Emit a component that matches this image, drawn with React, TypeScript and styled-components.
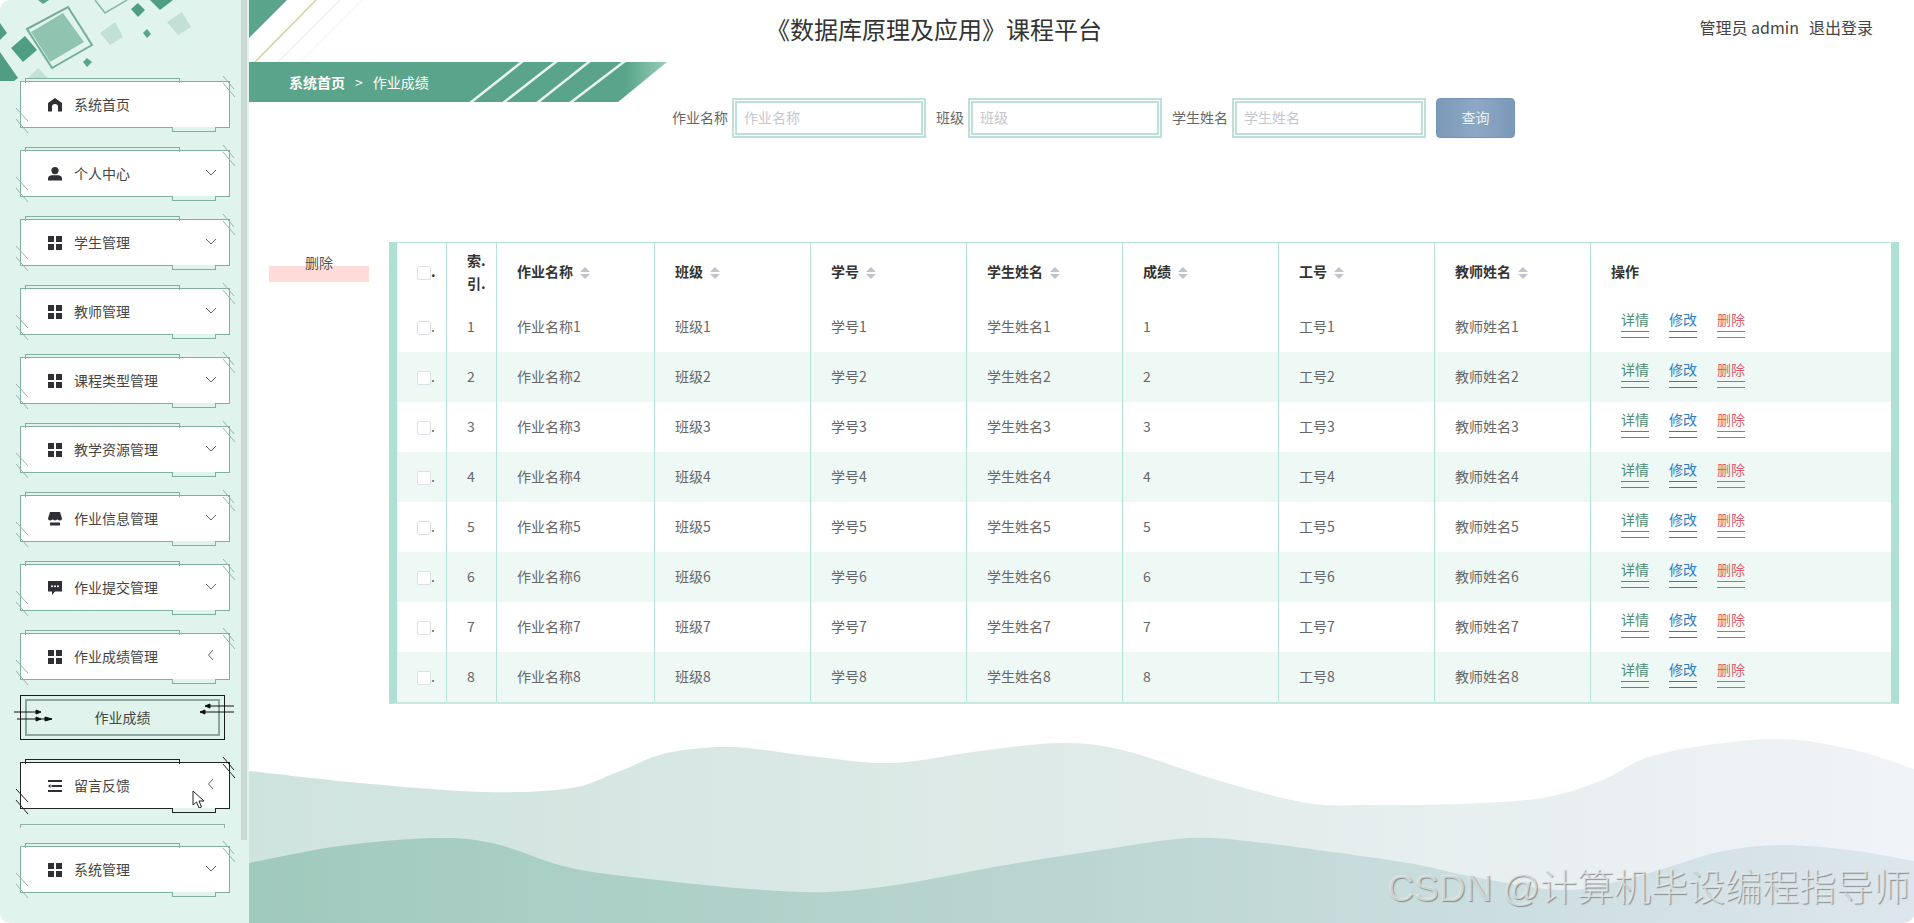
import React from 'react';
import styled, {createGlobalStyle} from 'styled-components';

const GlobalStyle = createGlobalStyle`
  html, body {
    margin: 0;
    padding: 0;
    background: #fff;
    overflow: hidden;
  }
  * {
    box-sizing: border-box;
  }
  body, input, button {
    font-family: "Noto Sans CJK SC", "Noto Sans", sans-serif;
  }
`

const Page = styled.div`
  display: flex;
  width: 1914px;
  height: 923px;
  overflow: hidden;
`

const Sidebar = styled.aside`
  position: relative;
  flex: 0 0 249px;
  height: 923px;
  overflow: hidden;
  background: #e0f4ed;
  border-radius: 10px 0 0 10px;

  &::after {
    content: '';
    position: absolute;
    top: 0;
    left: 241px;
    width: 6px;
    height: 840px;
    background: #cad9d4;
  }
`

const SideDecor = styled.svg`
  display: block;
  width: 241px;
  height: 81px;
`

const Item = styled.div<{ $hover?: boolean; $first?: boolean }>`
  position: relative;
  display: flex;
  align-items: center;
  width: 210px;
  height: 47px;
  margin: ${p => (p.$first ? '0' : '22px')} 0 0 20px;
  padding-left: 27px;
  background: #fff;
  border: 1px solid ${p => (p.$hover ? '#222' : '#7fb0a0')};
  color: ${p => (p.$hover ? '#222' : '#8fb8ab')};

  &::before {
    content: '';
    position: absolute;
    top: -4px;
    left: 4px;
    width: 153px;
    height: 4px;
    border: 1px solid ${p => (p.$hover ? '#222' : '#7fb0a0')};
    border-bottom: 0;
  }

  &::after {
    content: '';
    position: absolute;
    bottom: -5px;
    left: 151px;
    width: 42px;
    height: 4px;
    border: 1px solid ${p => (p.$hover ? '#222' : '#7fb0a0')};
    border-top: 0;
    background: #e0f4ed;
  }
`

const ItemLabel = styled.span`
  margin-left: 12px;
  padding-bottom: 1px;
  font-size: 14px;
  line-height: 20px;
  color: #454545;
`

const ItemIcon = styled.svg`
  width: 14px;
  height: 14px;
  flex: none;
`

const Arrow = styled.svg<{ $left?: boolean }>`
  position: absolute;
  top: ${p => (p.$left ? '16px' : '17px')};
  right: 12px;
  width: 12px;
  height: 10px;
`

const Stripes = styled.svg`
  position: absolute;
  top: -7px;
  left: -6px;
  width: 224px;
  height: 60px;
  pointer-events: none;
  overflow: visible;
`

const SubItem = styled.div`
  position: relative;
  display: flex;
  align-items: center;
  justify-content: center;
  width: 205px;
  height: 45px;
  margin: 15px 0 0 20px;
  padding-bottom: 2px;
  border: 1.5px solid #1b1b1b;
  font-size: 14px;
  color: #454545;

  &::before {
    content: '';
    position: absolute;
    inset: 3px 4px;
    border: 2px solid #8ea79f;
  }
`

const SubArrows = styled.svg`
  position: absolute;
  top: 6px;
  left: -8px;
  width: 224px;
  height: 22px;
  overflow: visible;
`

const HiddenTop = styled.div`
  width: 205px;
  height: 4px;
  margin: 15px 0 0 20px;
  border: 1px solid #8fb3a8;
  border-bottom: 0;
`

const MenuGap = styled.div`
  height: 18px;
`

const Main = styled.main`
  position: relative;
  flex: 1;
  min-width: 0;
  height: 923px;
  display: flex;
  flex-direction: column;
  overflow: hidden;
  border-radius: 0 0 10px 0;
  background: #fff;
`

const Header = styled.header`
  position: relative;
  display: flex;
  height: 62px;
  flex: none;
`

const HeaderDecor = styled.svg`
  position: absolute;
  top: 0;
  left: 0;
  width: 120px;
  height: 62px;
`

const Title = styled.h1`
  margin: 12px 0 0 517px;
  font-size: 24px;
  line-height: 34px;
  font-weight: 400;
  color: #333;
  white-space: nowrap;
`

const UserBox = styled.div`
  display: flex;
  gap: 10px;
  margin: 15px 41px 0 auto;
  font-size: 16px;
  line-height: 24px;
  color: #444;
  white-space: nowrap;
`

const Breadcrumb = styled.nav`
  position: relative;
  flex: none;
  display: flex;
  align-items: center;
  gap: 10px;
  width: 418px;
  height: 40px;
  padding-left: 40px;
  color: #fff;
  font-size: 14px;
  background: linear-gradient(90deg, #59a48a 0, #59a48a 90%, #97cdb9 100%);
  clip-path: polygon(0 0, 100% 0, 88.3% 100%, 0 100%);

  b {
    font-weight: 700;
  }
`

const BreadStripes = styled.svg`
  position: absolute;
  top: 0;
  left: 0;
  width: 418px;
  height: 40px;
`

const SearchRow = styled.form`
  flex: none;
  display: flex;
  align-items: center;
  height: 40px;
  margin-top: -4px;
  padding-left: 423px;
  position: relative;
`

const SearchLabel = styled.label`
  margin: 0 4px 3px 0;
  font-size: 14px;
  color: #666;
  white-space: nowrap;
`

const SearchInput = styled.input`
  width: 194px;
  height: 40px;
  margin-right: 10px;
  padding: 0 7px 2px;
  border: 5px double #bfe0da;
  outline: none;
  background: #fff;
  font-size: 14px;
  color: #606266;

  &::placeholder {
    color: #c4c7cd;
  }
`

const SearchButton = styled.button`
  width: 79px;
  height: 40px;
  padding: 0 0 2px;
  border: 1px solid #7594b4;
  border-radius: 4px;
  background: linear-gradient(90deg, #7b99b8, #8ca8c5 50%, #7b99b8);
  color: #eaf4f4;
  font-size: 14px;
`

const Content = styled.section`
  flex: none;
  display: flex;
  align-items: flex-start;
  gap: 20px;
  margin-top: 104px;
  padding-left: 20px;
`

const DeleteButton = styled.button`
  flex: none;
  width: 100px;
  height: 28px;
  margin-top: 12px;
  padding: 0 0 12px;
  border: 0;
  background: linear-gradient(180deg, #fff 0, #fff 43%, #ffdcd8 43%, #ffdcd8 100%);
  font-size: 14px;
  line-height: 16px;
  color: #555;
`

const Table = styled.table`
  width: 1510px;
  flex: none;
  table-layout: fixed;
  border-collapse: separate;
  border-spacing: 0;
  border-left: 8px solid #aee0d3;
  border-right: 8px solid #aee0d3;
  border-top: 1px solid #b5e2d8;
  border-bottom: 2px solid #c6e9e0;
  font-size: 14px;
  color: #666;
`

const HeadCell = styled.th`
  height: 59px;
  padding: 0 20px 2px;
  font-weight: 700;
  line-height: 23px;
  text-align: left;
  color: #333;
  border-right: 1px solid #b7e2da;
  white-space: nowrap;

  &:last-child {
    border-right: 0;
  }
`

const Row = styled.tr<{ $striped: boolean }>`
  background: ${p => (p.$striped ? '#eef8f5' : '#fff')};
`

const Cell = styled.td`
  height: 50px;
  padding: 0 20px 2px;
  border-right: 1px solid #b7e2da;
  white-space: nowrap;

  &:last-child {
    border-right: 0;
  }
`

const OpCell = styled(Cell)`
  padding: 7px 10px 0 20px;
  vertical-align: top;
`

const Check = styled.input`
  appearance: none;
  display: inline-block;
  width: 14px;
  height: 14px;
  margin: 0;
  border: 1px solid #dcdfe6;
  border-radius: 2px;
  background: #fff;
  vertical-align: middle;
`

const Sort = styled.span`
  display: inline-flex;
  flex-direction: column;
  gap: 2px;
  margin-left: 7px;
  vertical-align: middle;

  &::before, &::after {
    content: '';
    width: 0;
    height: 0;
    border-left: 5px solid transparent;
    border-right: 5px solid transparent;
  }

  &::before {
    border-bottom: 5px solid #c0c4cc;
  }

  &::after {
    border-top: 5px solid #c0c4cc;
  }
`

const OpLink = styled.a<{ $color: string }>`
  position: relative;
  display: inline-block;
  margin: 0 10px;
  padding-bottom: 9px;
  line-height: 20px;
  font-size: 14px;
  color: ${p => p.$color};

  &::after {
    content: '';
    position: absolute;
    left: 0;
    right: 0;
    bottom: 0;
    height: 5px;
    border-top: 1px solid ${p => p.$color};
    border-bottom: 1px solid ${p => p.$color};
  }
`

const Waves = styled.svg`
  display: block;
  flex: none;
  width: 1665px;
  height: 188px;
  margin-top: 32px;
`

const Watermark = styled.div`
  position: absolute;
  right: 4px;
  bottom: 11px;
  font-family: "Liberation Sans", "Noto Sans CJK SC", sans-serif;
  font-size: 37px;
  font-weight: 300;
  line-height: 46px;
  color: rgba(238, 240, 240, .7);
  text-shadow: 1px 1px 1px rgba(110, 115, 115, .75);
  white-space: nowrap;
`

const Cursor = styled.svg`
  position: absolute;
  top: 27px;
  left: 171px;
  width: 14px;
  height: 20px;
`

type IconName = 'home' | 'user' | 'grid' | 'shop' | 'chat' | 'list'

function Icon({name}: { name: IconName }) {
    return (
        <ItemIcon viewBox="0 0 14 14" fill="#2f2f35">
            {name === 'home' && <path d="M7 0 L14 5 V13.5 H10 V9 A3 3 0 0 0 4 9 V13.5 H0 V5 Z"/>}
            {name === 'user' && (
                <>
                    <circle cx="7" cy="3.6" r="3.6"/>
                    <path d="M0 13.5 V11.5 C0 9.2 2 8.2 4 8.2 H10 C12 8.2 14 9.2 14 11.5 V13.5 Z"/>
                </>
            )}
            {name === 'grid' && (
                <>
                    <rect x="0" y="0" width="6" height="6"/>
                    <rect x="8" y="0" width="6" height="6"/>
                    <rect x="0" y="8" width="6" height="6"/>
                    <rect x="8" y="8" width="6" height="6"/>
                </>
            )}
            {name === 'shop' && (
                <>
                    <path d="M2 0 H12 L14 6.5 C14 8 12.5 8.5 11.7 8.5 C10.8 8.5 9.8 8 9.3 7.3 C8.8 8 7.9 8.5 7 8.5 C6.1 8.5 5.2 8 4.7 7.3 C4.2 8 3.2 8.5 2.3 8.5 C1.5 8.5 0 8 0 6.5 Z"/>
                    <rect x="2" y="10.5" width="10" height="3"/>
                </>
            )}
            {name === 'chat' && (
                <>
                    <path d="M0 0 H14 V10.5 H7 L4 14 V10.5 H0 Z"/>
                    <circle cx="4" cy="5.2" r="1" fill="#fff"/>
                    <circle cx="7" cy="5.2" r="1" fill="#fff"/>
                    <circle cx="10" cy="5.2" r="1" fill="#fff"/>
                </>
            )}
            {name === 'list' && (
                <>
                    <rect x="0" y="1" width="14" height="2"/>
                    <rect x="3.5" y="6" width="10.5" height="2"/>
                    <path d="M0 7 L2.5 5 V9 Z"/>
                    <rect x="0" y="11" width="14" height="2"/>
                </>
            )}
        </ItemIcon>
    )
}

function CornerStripes() {
    return (
        <Stripes viewBox="0 0 224 60" fill="none" stroke="currentColor" strokeWidth="1">
            <path d="M208 1 L219 14 M208 8 L220 22"/>
            <path d="M1 33 L13 46 M1 44 L13 58"/>
        </Stripes>
    )
}

const menu: { label: string; icon: IconName; arrow?: 'down' | 'left' }[] = [
    {label: '系统首页', icon: 'home'},
    {label: '个人中心', icon: 'user', arrow: 'down'},
    {label: '学生管理', icon: 'grid', arrow: 'down'},
    {label: '教师管理', icon: 'grid', arrow: 'down'},
    {label: '课程类型管理', icon: 'grid', arrow: 'down'},
    {label: '教学资源管理', icon: 'grid', arrow: 'down'},
    {label: '作业信息管理', icon: 'shop', arrow: 'down'},
    {label: '作业提交管理', icon: 'chat', arrow: 'down'},
    {label: '作业成绩管理', icon: 'grid', arrow: 'left'},
]

function MenuItem({label, icon, arrow, hover, first, children}: {
    label: string
    icon: IconName
    arrow?: 'down' | 'left'
    hover?: boolean
    first?: boolean
    children?: React.ReactNode
}) {
    return (
        <Item $hover={hover} $first={first}>
            <Icon name={icon}/>
            <ItemLabel>{label}</ItemLabel>
            {arrow && (
                <Arrow $left={arrow === 'left'} viewBox="0 0 12 10" fill="none" stroke="#666" strokeWidth="1">
                    <path d={arrow === 'down' ? 'M1 2 L6 7 L11 2' : 'M8 0 L3.5 5 L8 10'}/>
                </Arrow>
            )}
            <CornerStripes/>
            {children}
        </Item>
    )
}

const columns = ['作业名称', '班级', '学号', '学生姓名', '成绩', '工号', '教师姓名']
const rows = [1, 2, 3, 4, 5, 6, 7, 8]

// wave outlines, smoothed into a catmull-rom curve
const topWave: number[][] = [[249, 770], [360, 782], [485, 791], [571, 787], [620, 770], [667, 752], [731, 746], [810, 755], [891, 762], [980, 750], [1062, 742], [1126, 750], [1220, 780], [1307, 802], [1371, 804], [1460, 803], [1542, 797], [1600, 780], [1659, 753], [1771, 738], [1850, 748], [1914, 768]]
const bottomWave: number[][] = [[249, 862], [340, 845], [437, 837], [496, 843], [571, 867], [667, 880], [750, 888], [827, 891], [902, 883], [1000, 865], [1094, 850], [1190, 837], [1264, 842], [1340, 852], [1414, 863], [1469, 875], [1560, 889], [1620, 880], [1672, 865], [1723, 850], [1782, 844], [1849, 849], [1914, 860]]

function wavePath(pts: number[][]) {
    let d = `M${pts[0][0]} ${pts[0][1]}`
    for (let i = 0; i < pts.length - 1; i++) {
        const p0 = pts[Math.max(i - 1, 0)]
        const p1 = pts[i]
        const p2 = pts[i + 1]
        const p3 = pts[Math.min(i + 2, pts.length - 1)]
        const c1x = p1[0] + (p2[0] - p0[0]) / 6
        const c1y = p1[1] + (p2[1] - p0[1]) / 6
        const c2x = p2[0] - (p3[0] - p1[0]) / 6
        const c2y = p2[1] - (p3[1] - p1[1]) / 6
        d += ` C${c1x} ${c1y} ${c2x} ${c2y} ${p2[0]} ${p2[1]}`
    }
    return d + ' V923 H249 Z'
}

function App() {
    return (
        <Page>
            <GlobalStyle/>
            <Sidebar>
                <SideDecor viewBox="0 0 241 81">
                    <path d="M0 52 L18 78 L0 91 Z M0 23 L7 33 L0 40 Z" fill="#4f9e84"/>
                    <path d="M11 48 L25 36 L37 50 L23 62 Z M131 9 L138 3 L145 10 L138 17 Z M150 0 L160 10 L173 0 Z" fill="#4f9e84"/>
                    <path d="M143 33 L147 29 L151 34 L147 38 Z M83 62 L87 58 L92 62 L87 67 Z M38 0 L43 4 L49 0 Z" fill="#5aa58c"/>
                    <path d="M100 33 L115 22 L123 37 L110 45 Z M167 22 L182 12 L191 27 L178 35 Z M28 78 L38 68 L48 78 Z" fill="#c3e0d6"/>
                    <path d="M31 32 L63 13 L84 42 L50 62 Z" fill="#90c4b1"/>
                    <path d="M27 29 L68 7 L92 45 L52 68 Z" fill="none" stroke="#74ae9b" strokeWidth="2"/>
                    <path d="M95 0 L105 13 L127 0" fill="none" stroke="#86b9a8" strokeWidth="1.5"/>
                </SideDecor>
                {menu.map((m, i) => (
                    <MenuItem key={m.label} label={m.label} icon={m.icon} arrow={m.arrow} first={i === 0}/>
                ))}
                <SubItem>
                    作业成绩
                    <SubArrows viewBox="0 0 224 22" fill="none" stroke="#111" strokeWidth="1">
                        <path d="M1 10 H23 M4 17 H39"/>
                        <path d="M23 8 L28 10 L23 12 Z M32 15 L39 17 L32 19 Z M23 15 L28 17 L23 19 Z" fill="#111"/>
                        <path d="M192 4 H221 M187 10 H221"/>
                        <path d="M197 2 L192 4 L197 6 Z M192 8 L187 10 L192 12 Z" fill="#111"/>
                    </SubArrows>
                </SubItem>
                <MenuItem label="留言反馈" icon="list" arrow="left" hover>
                    <Cursor viewBox="0 0 14 20">
                        <path d="M1 1 V15 L4.5 12 L7 18 L9.5 17 L7 11 H12 Z" fill="#fff" stroke="#222" strokeWidth="1"/>
                    </Cursor>
                </MenuItem>
                <HiddenTop/>
                <MenuGap/>
                <MenuItem label="系统管理" icon="grid" arrow="down" first/>
            </Sidebar>
            <Main>
                <Header>
                    <HeaderDecor viewBox="0 0 120 62" fill="none">
                        <path d="M0 0 H38 L0 38 Z" fill="#59a48a"/>
                        <path d="M6 62 L67 0" stroke="#d5cf9e" strokeWidth="1.5"/>
                        <path d="M29 62 L91 0" stroke="#e6e4e4"/>
                        <path d="M51 62 L113 0" stroke="#f0f0f0"/>
                    </HeaderDecor>
                    <Title>《数据库原理及应用》课程平台</Title>
                    <UserBox>
                        <span>管理员 admin</span>
                        <span>退出登录</span>
                    </UserBox>
                </Header>
                <Breadcrumb>
                    <b>系统首页</b>
                    <span>&gt;</span>
                    <span>作业成绩</span>
                    <BreadStripes viewBox="0 0 418 40" fill="none" stroke="#e8f5f0" strokeWidth="2.5">
                        <path d="M221 41 L274 -1 M254 41 L308 -1 M288 41 L341 -1 M321 41 L376 -1"/>
                    </BreadStripes>
                </Breadcrumb>
                <SearchRow onSubmit={e => e.preventDefault()}>
                    <SearchLabel>作业名称</SearchLabel>
                    <SearchInput placeholder="作业名称"/>
                    <SearchLabel>班级</SearchLabel>
                    <SearchInput placeholder="班级"/>
                    <SearchLabel>学生姓名</SearchLabel>
                    <SearchInput placeholder="学生姓名"/>
                    <SearchButton>查询</SearchButton>
                </SearchRow>
                <Content>
                    <DeleteButton>删除</DeleteButton>
                    <Table>
                        <colgroup>
                            <col width="50"/>
                            <col width="50"/>
                            <col width="158"/>
                            <col width="156"/>
                            <col width="156"/>
                            <col width="156"/>
                            <col width="156"/>
                            <col width="156"/>
                            <col width="156"/>
                            <col width="300"/>
                        </colgroup>
                        <thead>
                        <tr>
                            <HeadCell><Check type="checkbox"/>.</HeadCell>
                            <HeadCell>索.<br/>引.</HeadCell>
                            {columns.map(c => (
                                <HeadCell key={c}>{c}<Sort/></HeadCell>
                            ))}
                            <HeadCell>操作</HeadCell>
                        </tr>
                        </thead>
                        <tbody>
                        {rows.map(n => (
                            <Row key={n} $striped={n % 2 === 0}>
                                <Cell><Check type="checkbox"/>.</Cell>
                                <Cell>{n}</Cell>
                                <Cell>作业名称{n}</Cell>
                                <Cell>班级{n}</Cell>
                                <Cell>学号{n}</Cell>
                                <Cell>学生姓名{n}</Cell>
                                <Cell>{n}</Cell>
                                <Cell>工号{n}</Cell>
                                <Cell>教师姓名{n}</Cell>
                                <OpCell>
                                    <OpLink $color="#4c8f75">详情</OpLink>
                                    <OpLink $color="#2f7cc6">修改</OpLink>
                                    <OpLink $color="#d9606a">删除</OpLink>
                                </OpCell>
                            </Row>
                        ))}
                        </tbody>
                    </Table>
                </Content>
                <Waves viewBox="249 735 1665 188" preserveAspectRatio="none">
                    <defs>
                        <linearGradient id="waveTop" x1="0" x2="1" y1="0" y2="0">
                            <stop offset="0" stopColor="#cfe3de"/>
                            <stop offset=".5" stopColor="#dfebe8"/>
                            <stop offset="1" stopColor="#f0f3f7"/>
                        </linearGradient>
                        <linearGradient id="waveBottom" x1="0" x2="1" y1="0" y2="0">
                            <stop offset="0" stopColor="#a0cabd"/>
                            <stop offset=".5" stopColor="#bbd6d1"/>
                            <stop offset="1" stopColor="#dde6ee"/>
                        </linearGradient>
                    </defs>
                    <path d={wavePath(topWave)} fill="url(#waveTop)"/>
                    <path d={wavePath(bottomWave)} fill="url(#waveBottom)"/>
                </Waves>
                <Watermark>CSDN @计算机毕设编程指导师</Watermark>
            </Main>
        </Page>
    );
}

export default App;
